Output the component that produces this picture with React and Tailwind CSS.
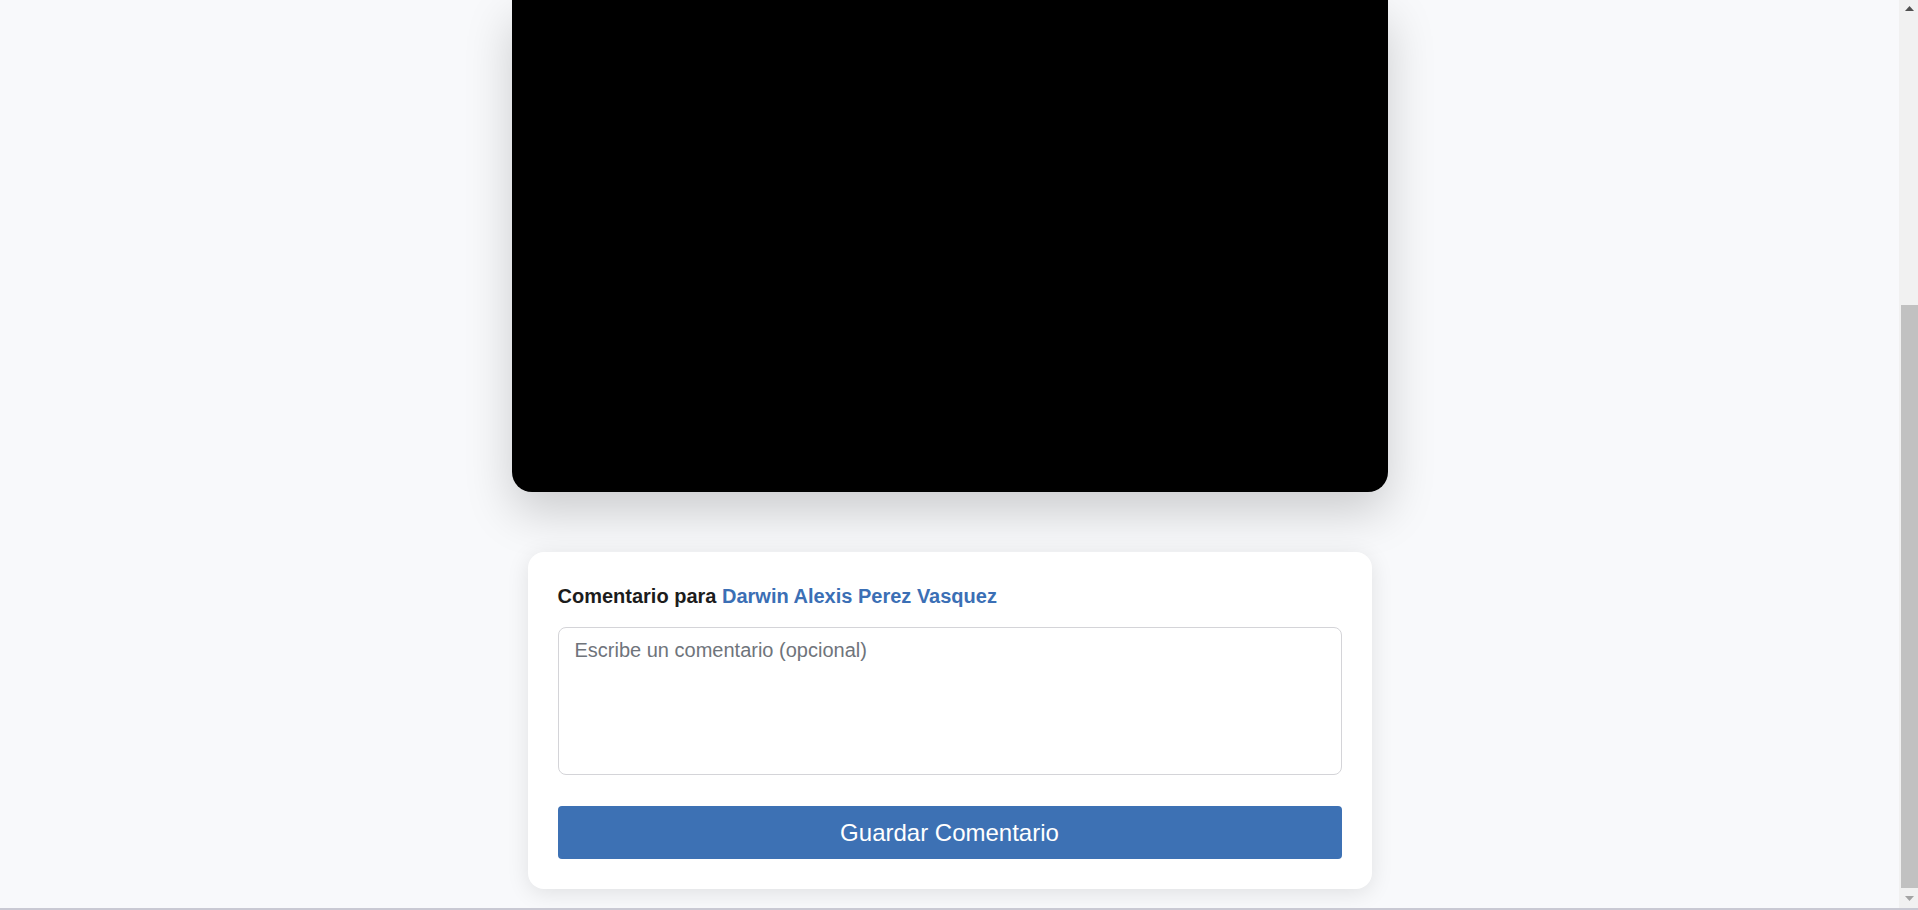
import React, { useState } from 'react';

function FakeScrollbar() {
    // Windows-style classic scrollbar, page scrolled near the bottom
    return (
        <div className="w-[19px] shrink-0 bg-[#f1f1f1] flex flex-col">
            <div className="h-[17px] flex items-center justify-center pl-[2px]">
                <svg width="9" height="5" viewBox="0 0 9 5"><path d="M4.5 0L9 5H0z" fill="#505050" /></svg>
            </div>
            <div className="h-[288px]" />
            <div className="h-[583px] ml-[2px] bg-[#c1c1c1]" />
            <div className="flex-1 flex items-center justify-center pl-[2px]">
                <svg width="9" height="5" viewBox="0 0 9 5"><path d="M0 0H9L4.5 5z" fill="#a3a3a3" /></svg>
            </div>
        </div>
    );
}

function CommentCard({ studentName }) {
    const [comment, setComment] = useState('');

    return (
        <div className="w-[844px] mt-[60px] bg-white rounded-2xl p-[30px] shadow-[0_4px_22px_rgba(0,0,0,0.10)]">
            <h3 className="text-xl leading-7 font-bold text-[#1c1c1c] mb-[17px]">
                Comentario para <span className="text-[#3b6fb5]">{studentName}</span>
            </h3>
            <textarea
                value={comment}
                onChange={e => setComment(e.target.value)}
                placeholder="Escribe un comentario (opcional)"
                className="block w-full h-[148px] resize-none border border-[#d4d4d8] rounded-lg px-4 pt-[11px] text-xl leading-[23px] text-[#222] placeholder:text-[#6f747b] outline-none"
            />
            <button className="mt-[31px] w-full h-[53px] rounded bg-[#3d71b4] text-white text-2xl">
                Guardar Comentario
            </button>
        </div>
    );
}

export default function App() {
    return (
        <div className="h-[910px] flex flex-col bg-[#f8f9fb] font-['Liberation_Sans',Arial,sans-serif] overflow-hidden">
            <div className="flex-1 flex min-h-0">
                <main className="flex-1 flex flex-col items-center overflow-hidden">
                    {/* video player, top part scrolled out of view */}
                    <div className="w-[876px] h-[492px] shrink-0 bg-black rounded-b-[20px] shadow-[0_20px_48px_rgba(0,0,0,0.18)]" />
                    <CommentCard studentName="Darwin Alexis Perez Vasquez" />
                </main>
                <FakeScrollbar />
            </div>
            <div className="h-[2px] bg-[#c9c9d3]" />
        </div>
    );
}
